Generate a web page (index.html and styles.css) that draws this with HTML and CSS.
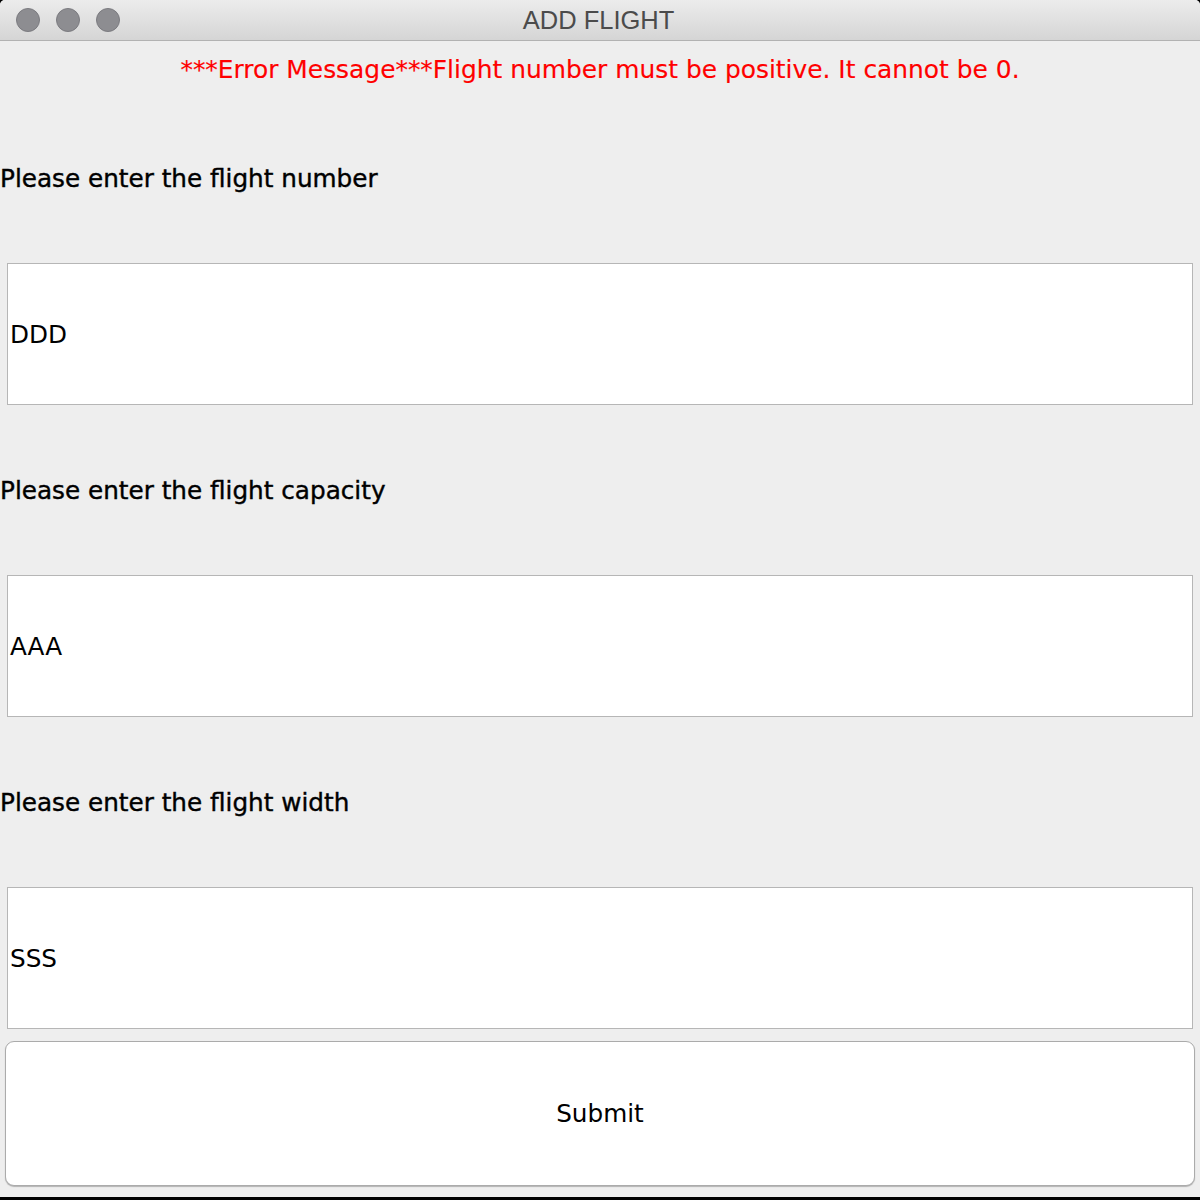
FILE: index.html
```html
<!DOCTYPE html>
<html lang="en">
<head>
<meta charset="utf-8">
<title>ADD FLIGHT</title>
<link rel="stylesheet" href="styles.css">
</head>
<body>
<div class="window">
  <div class="titlebar">
    <div class="lights">
      <span class="light"></span>
      <span class="light"></span>
      <span class="light"></span>
    </div>
    <div class="title">ADD FLIGHT</div>
  </div>
  <div class="error">***Error Message***Flight number must be positive. It cannot be 0.</div>
  <div class="form">
    <div class="row label">Please enter the flight number</div>
    <div class="row field-cell"><div class="field">DDD</div></div>
    <div class="row label">Please enter the flight capacity</div>
    <div class="row field-cell"><div class="field">AAA</div></div>
    <div class="row label">Please enter the flight width</div>
    <div class="row field-cell"><div class="field">SSS</div></div>
    <div class="row button-cell"><div class="button">Submit</div></div>
  </div>
</div>
</body>
</html>
```
FILE: styles.css
```css
html, body {
  margin: 0;
  padding: 0;
}
body {
  width: 1200px;
  height: 1200px;
  background: #000;
  font-family: "DejaVu Sans", "Liberation Sans", sans-serif;
  overflow: hidden;
}
.window {
  height: 1197px;
  background: #eeeeee;
  display: flex;
  flex-direction: column;
  border-top-left-radius: 5px;
  border-top-right-radius: 5px;
  overflow: hidden;
}
.titlebar {
  height: 40px;
  border-bottom: 1px solid #b2b2b2;
  background: linear-gradient(#ececec, #d5d5d5);
  display: flex;
  align-items: center;
  justify-content: center;
  position: relative;
  flex: none;
}
.lights {
  position: absolute;
  left: 16px;
  top: 8px;
  display: flex;
  gap: 16px;
}
.light {
  width: 22px;
  height: 22px;
  border-radius: 50%;
  background: #8d8d91;
  border: 1px solid #7b7b80;
}
.title {
  font-family: "Liberation Sans", Arial, sans-serif;
  font-size: 25.5px;
  color: #4b4b4b;
  margin-left: -3px;
  margin-top: 1px;
}
.error {
  height: 59px;
  flex: none;
  display: flex;
  align-items: center;
  justify-content: center;
  color: #ff0000;
  font-size: 24.9px;
  padding-bottom: 2px;
  box-sizing: border-box;
  -webkit-text-stroke: 0.15px #ff0000;
}
.form {
  display: grid;
  grid-template-rows: repeat(7, 156px);
}
.row {
  display: flex;
  align-items: center;
  box-sizing: border-box;
}
.label {
  font-size: 24.7px;
  color: #000;
  padding-left: 0;
  -webkit-text-stroke: 0.4px #000;
}
.field-cell {
  padding: 7px;
}
.field {
  width: 100%;
  height: 100%;
  box-sizing: border-box;
  background: #fff;
  border: 1px solid #b6b6b6;
  display: flex;
  align-items: center;
  padding-left: 2px;
  font-size: 24.7px;
  color: #000;
}
.button-cell {
  padding: 5px 5px 6px 5px;
}
.button {
  width: 100%;
  height: 100%;
  box-sizing: border-box;
  background: #fff;
  border: 1px solid #ababab;
  border-radius: 9px;
  box-shadow: 0 1px 1px rgba(0, 0, 0, 0.25);
  display: flex;
  align-items: center;
  justify-content: center;
  font-size: 24.7px;
  color: #000;
}
```
